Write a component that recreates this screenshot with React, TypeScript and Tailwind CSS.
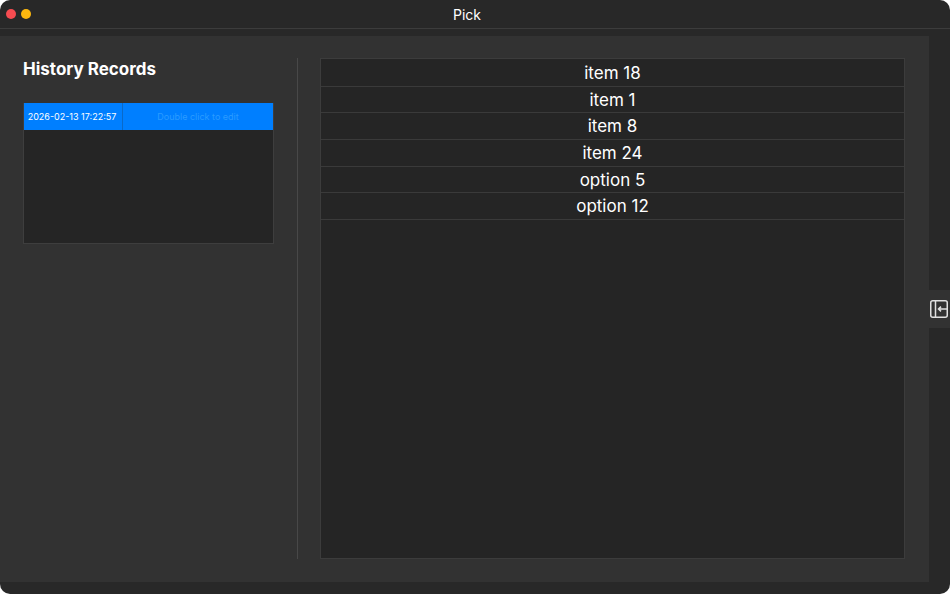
const items = ['item 18', 'item 1', 'item 8', 'item 24', 'option 5', 'option 12'];

const App = () => {
  return (
    <div className="w-[950px] h-[594px] bg-white overflow-hidden">
      <div className="w-full h-full flex flex-col rounded-[10px] overflow-hidden bg-[#282828] text-white font-['Inter',sans-serif]">
        {/* Title bar */}
        <div className="h-[29px] shrink-0 flex items-center border-b border-[#3c3c3c] pl-[6px] pr-[22px]">
          <div className="flex items-center gap-[5px] w-[30px]">
            <span className="w-[10px] h-[10px] rounded-full bg-[#f64c51]" />
            <span className="w-[10px] h-[10px] rounded-full bg-[#fdb80f]" />
          </div>
          <div className="flex-1 text-center text-[14px] leading-[29px] text-white">Pick</div>
          <div className="w-[30px]" />
        </div>

        <div className="flex items-center pt-[7px] pb-[12px] flex-1 min-h-0">
          {/* Main panel */}
          <div className="w-[929px] h-full bg-[#323232] flex pt-[22px] pb-[23px] pl-[23px] pr-[24px]">
            <div className="w-[251px] shrink-0 flex flex-col">
              <h1 className="text-[17px] leading-[22px] font-bold text-white">History Records</h1>
              <div className="mt-[23px] h-[141px] bg-[#252525] border border-t-0 border-[#3e3e3e]">
                <div className="h-[27px] flex bg-[#007fff]">
                  <div className="w-[99px] shrink-0 border-r border-[#0a69c8] flex items-center justify-center pr-[2px] text-[9px] text-white">
                    2026-02-13 17:22:57
                  </div>
                  <div className="flex-1 flex items-center justify-center text-[9px] text-[#2a9bff]">
                    Double click to edit
                  </div>
                </div>
              </div>
            </div>

            <div className="w-px shrink-0 ml-[23px] bg-[#484848]" />

            <div className="flex-1 ml-[22px] pt-px bg-[#252525] border border-[#3c3c3c]">
              {items.map((item) => (
                <div
                  key={item}
                  className="h-[26.7px] pt-px flex items-center justify-center border-b border-[#3a3a3a] text-[17px] leading-none text-white"
                >
                  {item}
                </div>
              ))}
            </div>
          </div>

          {/* Sidebar toggle */}
          <div className="w-[21px] h-[38px] bg-[#323232] flex items-center justify-end pr-[2px]">
            <svg width="18" height="18" viewBox="0 0 18 18" fill="none" stroke="#e0e0e0" strokeWidth="1.5">
              <rect x="0.75" y="0.75" width="16.5" height="16.5" rx="2" />
              <path d="M5.5 0.75V17.25" />
              <path d="M17.25 9H8.5M11 6.6L8.5 9L11 11.4" />
            </svg>
          </div>
        </div>
      </div>
    </div>
  );
};

export default App;
